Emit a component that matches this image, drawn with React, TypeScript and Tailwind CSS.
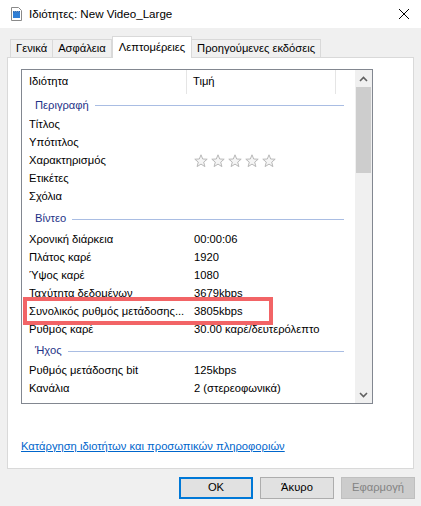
import React from 'react';

type Row = [string, string];
type Group = { name: string; h: string; rows: Row[] };

const groups: Group[] = [
  {
    name: 'Περιγραφή',
    h: 'h-[22px]',
    rows: [
      ['Τίτλος', ''],
      ['Υπότιτλος', ''],
      ['Χαρακτηρισμός', 'stars'],
      ['Ετικέτες', ''],
      ['Σχόλια', ''],
    ],
  },
  {
    name: 'Βίντεο',
    h: 'h-[25px]',
    rows: [
      ['Χρονική διάρκεια', '00:00:06'],
      ['Πλάτος καρέ', '1920'],
      ['Ύψος καρέ', '1080'],
      ['Ταχύτητα δεδομένων', '3679kbps'],
      ['Συνολικός ρυθμός μετάδοσης...', '3805kbps'],
      ['Ρυθμός καρέ', '30.00 καρέ/δευτερόλεπτο'],
    ],
  },
  {
    name: 'Ήχος',
    h: 'h-[23px]',
    rows: [
      ['Ρυθμός μετάδοσης bit', '125kbps'],
      ['Κανάλια', '2 (στερεοφωνικά)'],
    ],
  },
];

const Star = () => (
  <svg width="14" height="14" viewBox="0 0 14 14">
    <polygon
      points="7,0.8 8.7,5 13.2,5.2 9.7,8.1 10.9,12.6 7,10.1 3.1,12.6 4.3,8.1 0.8,5.2 5.3,5"
      fill="#f5f5f5"
      stroke="#b8b8b8"
      strokeWidth="1"
    />
  </svg>
);

const FileIcon = () => (
  <svg width="11" height="14" viewBox="0 0 11 14">
    <path d="M0.5 0.5 H7.5 L10.5 3.5 V13.5 H0.5 Z" fill="#fff" stroke="#8a8a8a" />
    <rect x="2" y="5" width="7" height="6" fill="#2f7fd6" />
    <rect x="2" y="4" width="7" height="1.5" fill="#1b5fb0" />
    <path d="M3 4.2 L4 5.3 M5 4.2 L6 5.3 M7 4.2 L8 5.3" stroke="#fff" strokeWidth="0.6" />
  </svg>
);

const Chevron = ({ down }: { down?: boolean }) => (
  <svg width="9" height="6" viewBox="0 0 9 6">
    <path
      d={down ? 'M1 1 L4.5 4.5 L8 1' : 'M1 5 L4.5 1.5 L8 5'}
      fill="none"
      stroke="#606060"
      strokeWidth="1.6"
    />
  </svg>
);

const Tab = ({ label, active }: { label: string; active?: boolean }) =>
  active ? (
    <div className="relative z-10 h-[22px] -mb-px px-[6px] bg-white border border-b-0 border-[#d9d9d9] flex items-center">
      {label}
    </div>
  ) : (
    <div className="h-[18px] px-[5px] bg-[#f0f0f0] border border-b-0 border-[#d9d9d9] flex items-center -ml-px first:ml-0">
      {label}
    </div>
  );

export default function App() {
  return (
    <div className="w-[421px] h-[506px] bg-[#f0f0f0] flex flex-col text-[11.2px] text-black font-['Liberation_Sans',Arial,sans-serif] leading-none overflow-hidden">
      {/* title bar */}
      <div className="h-[28px] bg-white flex items-center pl-[11px] pr-[11px]">
        <FileIcon />
        <span className="ml-[7px] text-[11.6px]">Ιδιότητες: New Video_Large</span>
        <div className="ml-auto">
          <svg width="12" height="12" viewBox="0 0 12 12">
            <path d="M1 1 L11 11 M11 1 L1 11" stroke="#000" strokeWidth="1" />
          </svg>
        </div>
      </div>

      {/* tabs */}
      <div className="h-[29px] flex items-end pl-[10px]">
        <Tab label="Γενικά" />
        <Tab label="Ασφάλεια" />
        <Tab label="Λεπτομέρειες" active />
        <Tab label="Προηγούμενες εκδόσεις" />
      </div>

      {/* panel */}
      <div className="ml-[7px] w-[407px] h-[412px] bg-white border border-[#d9d9d9] flex flex-col">
        <div className="relative mt-[11px] ml-[13px] w-[352px] h-[335px] border border-[#828790] flex overflow-hidden">
          <div className="flex-1 flex flex-col">
            <div className="h-[24px] flex items-stretch">
              <div className="w-[165px] pl-[7px] flex items-center border-r border-[#e5e5e5]">Ιδιότητα</div>
              <div className="w-[149px] pl-[6px] flex items-center border-r border-[#e5e5e5]">Τιμή</div>
            </div>
            {groups.map((g) => (
              <div key={g.name}>
                <div className={`${g.h} flex items-center pl-[13px] pr-[11px] pt-[1px]`}>
                  <span className="text-[#1e3287]">{g.name}</span>
                  <div className="flex-1 ml-[6px] h-px bg-[#a9bde3]" />
                </div>
                {g.rows.map(([k, v]) => (
                  <div key={k} className="h-[18px] flex items-center pl-[7px] whitespace-nowrap">
                    <div className="w-[165px] overflow-hidden">{k}</div>
                    {v === 'stars' ? (
                      <div className="flex gap-[3px]">
                        <Star />
                        <Star />
                        <Star />
                        <Star />
                        <Star />
                      </div>
                    ) : (
                      <div>{v}</div>
                    )}
                  </div>
                ))}
              </div>
            ))}
          </div>
          {/* scrollbar */}
          <div className="w-[17px] bg-[#f0f0f0] flex flex-col">
            <div className="h-[17px] flex items-center justify-center">
              <Chevron />
            </div>
            <div className="h-[86px] mx-[1px] bg-[#cdcdcd]" />
            <div className="flex-1" />
            <div className="h-[17px] flex items-center justify-center">
              <Chevron down />
            </div>
          </div>
          {/* highlight */}
          <div className="absolute left-[1px] top-[227px] w-[250px] h-[28px] border-[4px] border-[#f26466]" />
        </div>
        <div className="mt-[35px] ml-[13px]">
          <span className="text-[#0066cc] underline leading-[15px]">
            Κατάργηση ιδιοτήτων και προσωπικών πληροφοριών
          </span>
        </div>
      </div>

      {/* buttons */}
      <div className="mt-[8px] flex justify-end gap-[7px] pr-[6px]">
        <button className="w-[74px] h-[22px] bg-[#e1e1e1] border-2 border-[#0078d7]">OK</button>
        <button className="w-[74px] h-[22px] bg-[#e1e1e1] border border-[#adadad]">Άκυρο</button>
        <button className="w-[74px] h-[22px] bg-[#cccccc] border border-[#bfbfbf] text-[#838383]">Εφαρμογή</button>
      </div>
    </div>
  );
}
